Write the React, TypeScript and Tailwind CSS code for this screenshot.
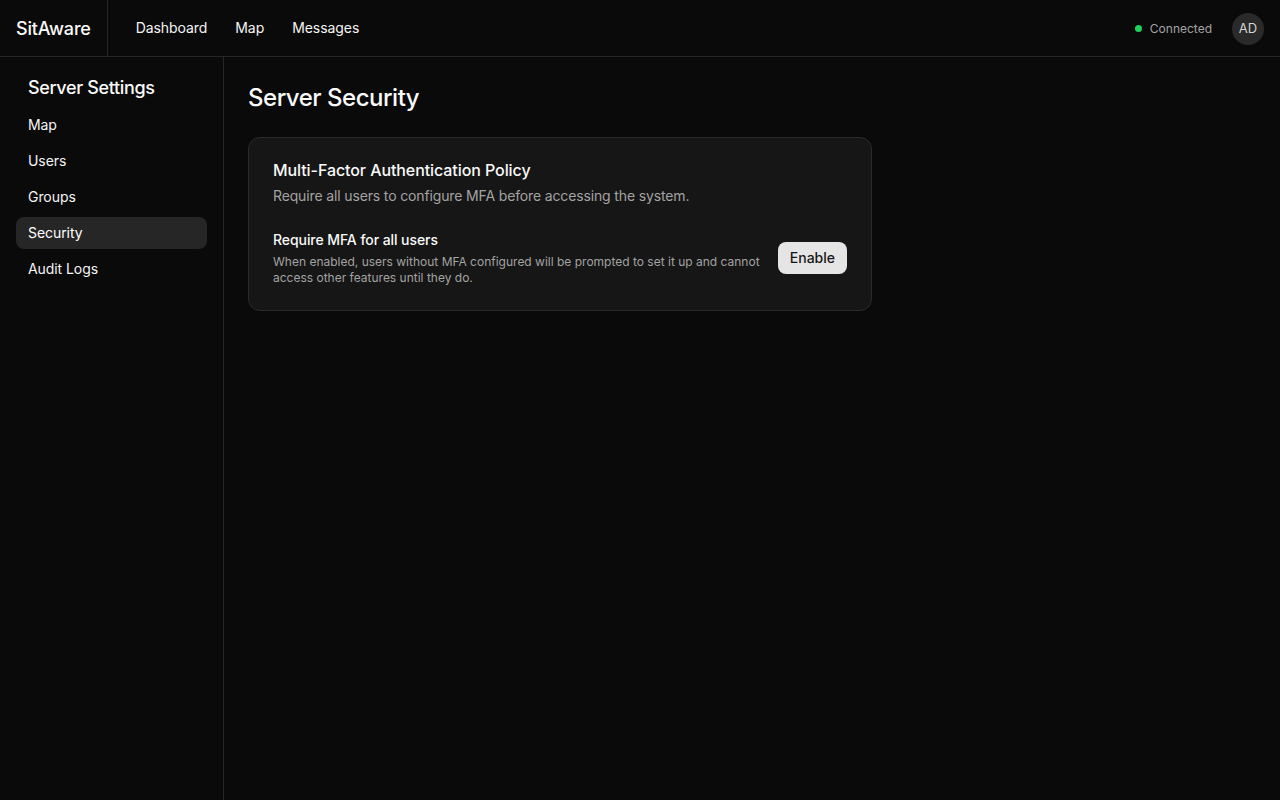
import { useState } from "react";

const App = () => {
  const [active, setActive] = useState("Security");
  const navLinks = ["Dashboard", "Map", "Messages"];
  const sideItems = ["Map", "Users", "Groups", "Security", "Audit Logs"];

  return (
    <div
      className="min-h-screen bg-[#0a0a0a] text-[#fafafa] flex flex-col"
      style={{ fontFamily: "Inter, 'Noto Sans', sans-serif" }}
    >
      <header className="h-[57px] shrink-0 border-b border-[#262626] flex items-center">
        <div className="h-full flex items-center pl-4 pr-4 border-r border-[#262626]">
          <span className="text-[18px] font-medium tracking-[-0.01em]">SitAware</span>
        </div>
        <nav className="flex items-center gap-1 pl-4">
          {navLinks.map((link) => (
            <a key={link} href="#" className="px-3 py-1.5 text-sm tracking-[-0.005em] text-[#f5f5f5]">
              {link}
            </a>
          ))}
        </nav>
        <div className="ml-auto flex items-center gap-5 pr-4 pt-px">
          <div className="flex items-center gap-2">
            <span className="w-[7px] h-[7px] rounded-full bg-[#1ed35b]" />
            <span className="text-[12px] text-[#a3a3a3]">Connected</span>
          </div>
          <div className="w-8 h-8 rounded-full bg-[#2a2a2a] flex items-center justify-center text-[13px] text-[#d4d4d4]">
            AD
          </div>
        </div>
      </header>

      <div className="flex flex-1">
        <aside className="w-[224px] shrink-0 border-r border-[#262626] px-4 pt-[17px]">
          <h2 className="px-3 text-lg leading-7 font-medium tracking-[-0.02em] mb-[7px]">Server Settings</h2>
          <div className="flex flex-col gap-1">
            {sideItems.map((item) => (
              <button
                key={item}
                onClick={() => setActive(item)}
                className={`h-8 px-3 rounded-lg text-left text-sm tracking-[-0.005em] ${
                  active === item ? "bg-[#262626] text-white" : "text-[#f5f5f5]"
                }`}
              >
                {item}
              </button>
            ))}
          </div>
        </aside>

        <main className="flex-1 px-6 pb-6 pt-[25px]">
          <h1 className="text-2xl leading-8 font-medium tracking-[-0.02em] mb-[23px]">Server Security</h1>
          <div className="w-[624px] rounded-xl border border-[#2a2a2a] bg-[#161616] p-6">
            <h3 className="text-[16px] leading-4 font-medium tracking-[-0.005em]">Multi-Factor Authentication Policy</h3>
            <p className="mt-2 text-sm leading-5 tracking-[-0.01em] text-[#a3a3a3]">
              Require all users to configure MFA before accessing the system.
            </p>
            <div className="mt-6 flex items-center gap-4">
              <div className="flex-1">
                <div className="text-sm leading-5 font-medium tracking-[-0.005em]">Require MFA for all users</div>
                <p className="mt-1 text-xs leading-4 text-[#a3a3a3]">
                  When enabled, users without MFA configured will be prompted to set it up and cannot
                  access other features until they do.
                </p>
              </div>
              <button className="h-8 px-3 rounded-lg bg-[#e5e5e5] text-[#171717] text-sm font-medium">
                Enable
              </button>
            </div>
          </div>
        </main>
      </div>
    </div>
  );
};

export default App;
